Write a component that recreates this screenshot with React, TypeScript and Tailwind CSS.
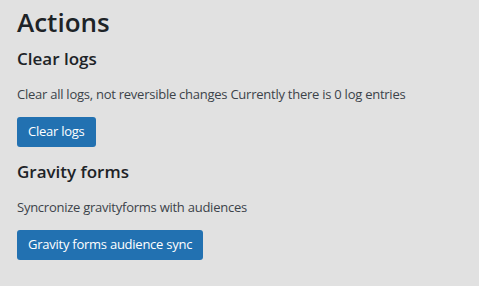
import React from "react";

const sections = [
  {
    title: "Clear logs",
    text: "Clear all logs, not reversible changes Currently there is 0 log entries",
    button: "Clear logs",
  },
  {
    title: "Gravity forms",
    text: "Syncronize gravityforms with audiences",
    button: "Gravity forms audience sync",
  },
];

const App = () => {
  return (
    <div className="min-h-screen w-full bg-[#e1e1e1] px-[17px] pt-[4px] font-['Open_Sans',sans-serif] text-[#1d2327]">
      <h1 className="text-[26px] font-semibold leading-[36px]">Actions</h1>
      {sections.map((section, i) => (
        <div key={section.title} className={i === 0 ? "mt-[7px]" : "mt-[13px]"}>
          <h2 className="text-[17px] font-semibold leading-[24px]">
            {section.title}
          </h2>
          <p className="mt-[13px] text-[13px] leading-[20px] tracking-[-0.25px] text-[#3c434a]">
            {section.text}
          </p>
          <button className="mt-[13px] h-[30px] rounded-[3px] bg-[#2271b1] px-[11px] text-[13px] tracking-[-0.25px] text-white">
            {section.button}
          </button>
        </div>
      ))}
    </div>
  );
};

export default App;
